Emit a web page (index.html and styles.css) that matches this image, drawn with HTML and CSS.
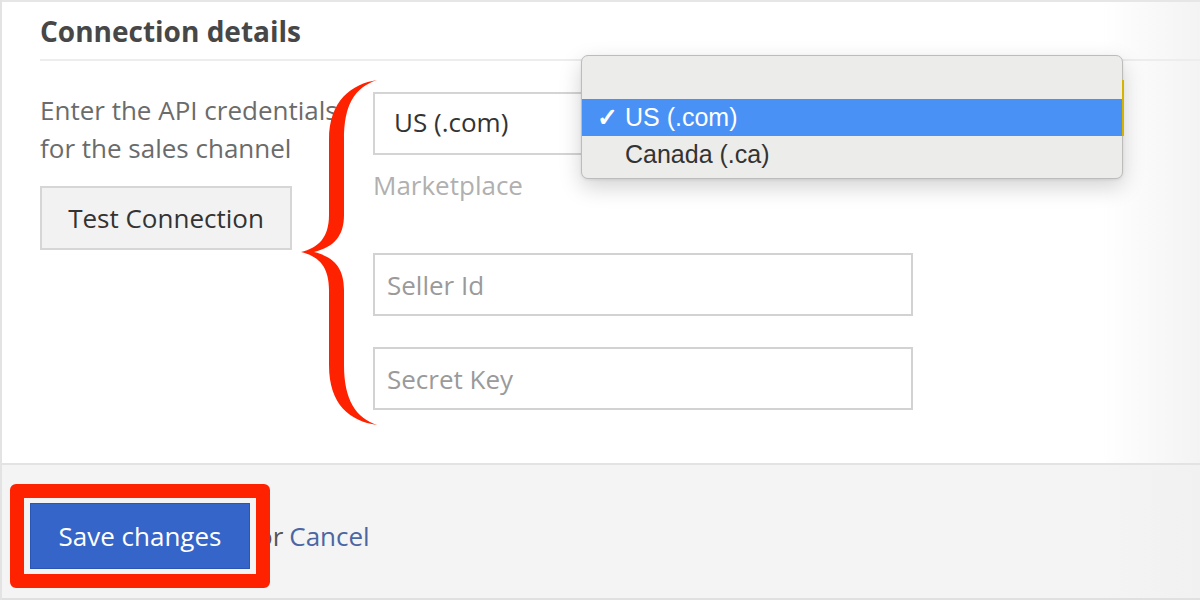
FILE: index.html
```html
<!DOCTYPE html>
<html lang="en">
<head>
<meta charset="utf-8">
<title>Connection details</title>
<link rel="stylesheet" href="styles.css">
</head>
<body>
<div class="page">
  <section class="panel">
    <h2 class="title">Connection details</h2>
    <div class="rule"></div>
    <div class="body">
      <div class="intro">
        <p class="intro-text">Enter the API credentials<br>for the sales channel</p>
        <button class="btn-test" type="button">Test Connection</button>
      </div>
      <div class="fields">
        <div class="select">US (.com)</div>
        <div class="field-label">Marketplace</div>
        <div class="input">Seller Id</div>
        <div class="input input-last">Secret Key</div>
      </div>
    </div>

    <svg class="brace" viewBox="296 76 84 354" width="84" height="354" aria-hidden="true">
      <path fill="#ff2200" d="M377 80 C352 84 329 100 329 140 L329 215 C329 238 318 248 301 252 C318 256 329 266 329 290 L329 365 C329 405 350 421 377 425 C356 418 344 400 344 365 L344 290 C344 268 334 257 314 252 C334 247 344 236 344 215 L344 140 C344 105 354 88 377 80 Z"/>
    </svg>

    <div class="menu">
      <span class="menu-edge"></span>
      <div class="menu-item is-selected"><span class="check">✓</span>US (.com)</div>
      <div class="menu-item"><span class="check"></span>Canada (.ca)</div>
    </div>
  </section>

  <footer class="actions">
    <span class="save-wrap">
      <button class="btn-save" type="button">Save changes</button>
      <span class="highlight"></span>
    </span>
    <span class="or">or</span>
    <a class="cancel" href="#">Cancel</a>
  </footer>
</div>
</body>
</html>
```

FILE: styles.css
```css
* { box-sizing: border-box; }

html, body {
  margin: 0;
  padding: 0;
  background: #ffffff;
}

body {
  font-family: "Open Sans", "Noto Sans", sans-serif;
  width: 1200px;
  height: 600px;
  overflow: hidden;
}

.page {
  position: relative;
  width: 1200px;
  height: 600px;
  border-left: 2px solid #e3e3e3;
}

.panel {
  position: relative;
  border-top: 2px solid #e6e6e6;
  height: 463px;
  background: linear-gradient(to right, #ffffff 0, #ffffff 1100px, #f3f3f3 1200px);
}

.title {
  margin: 0;
  padding: 13px 0 0 38px;
  font-size: 28px;
  line-height: 32px;
  font-weight: 700;
  color: #474747;
}

.rule {
  margin: 12px 0 0 38px;
  height: 2px;
  background: #ededed;
}

.body {
  display: grid;
  grid-template-columns: 333px 540px;
  padding: 30px 0 0 38px;
}

.intro-text {
  margin: 0;
  font-size: 26px;
  line-height: 38px;
  color: #6b6b6b;
  white-space: nowrap;
}

.btn-test {
  display: block;
  margin-top: 19px;
  width: 252px;
  height: 64px;
  background: #f2f2f2;
  border: 2px solid #d6d6d6;
  font-family: "Open Sans", sans-serif;
  font-size: 26px;
  color: #333333;
  padding: 0;
}

.fields {
  padding-top: 1px;
}

.select {
  width: 749px;
  height: 63px;
  border: 2px solid #d4d4d4;
  padding-left: 19px;
  font-size: 26px;
  line-height: 57px;
  color: #333333;
}

.field-label {
  margin-top: 15px;
  font-size: 26px;
  line-height: 30px;
  color: #b0b0b0;
}

.input {
  margin-top: 53px;
  width: 540px;
  height: 63px;
  border: 2px solid #d2d2d2;
  padding-left: 12px;
  font-size: 26px;
  line-height: 61px;
  color: #9a9a9a;
}

.input-last {
  margin-top: 31px;
}

.brace {
  position: absolute;
  left: 294px;
  top: 74px;
}

.menu {
  position: absolute;
  left: 579px;
  top: 53px;
  width: 542px;
  height: 124px;
  padding-top: 43px;
  background: #ececea;
  border: 1px solid #bcbcbc;
  border-radius: 7px;
  box-shadow: 0 8px 22px rgba(0, 0, 0, 0.18), 0 1px 3px rgba(0, 0, 0, 0.08);
  font-family: "Liberation Sans", Arial, sans-serif;
  font-size: 25px;
  color: #333333;
}

.menu-edge {
  position: absolute;
  right: -2px;
  top: 24px;
  width: 2px;
  height: 56px;
  background: #d6b300;
}

.menu-item {
  display: flex;
  align-items: center;
  height: 37px;
  padding-left: 15px;
  white-space: nowrap;
}

.menu-item.is-selected {
  background: #4a91f6;
  color: #ffffff;
}

.check {
  display: inline-block;
  width: 28px;
  font-size: 25px;
  font-weight: 700;
}

.actions {
  display: flex;
  align-items: center;
  height: 137px;
  padding: 38px 0 29px 28px;
  border-top: 2px solid #e3e3e3;
  border-bottom: 2px solid #e0e0e0;
  background: linear-gradient(to right, #f4f4f4 0, #f4f4f4 1100px, #f1f1f1 1200px);
}

.save-wrap {
  position: relative;
  z-index: 1;
  display: inline-block;
}

.btn-save {
  display: block;
  width: 220px;
  height: 66px;
  background: #3565c8;
  border: 1px solid #2a55b2;
  color: #ffffff;
  font-family: "Open Sans", sans-serif;
  font-size: 26px;
  padding: 0;
}

.highlight {
  position: absolute;
  top: -19px;
  bottom: -19px;
  left: -20px;
  right: -20px;
  border: 14px solid #ff2200;
  border-radius: 6px;
}

.or {
  margin-left: 7px;
  font-size: 26px;
  color: #555555;
}

.cancel {
  margin-left: 6px;
  font-size: 26px;
  color: #4a66a3;
  text-decoration: none;
}
```
